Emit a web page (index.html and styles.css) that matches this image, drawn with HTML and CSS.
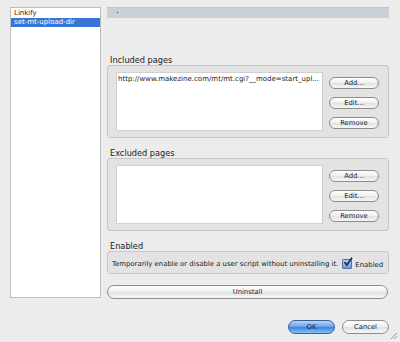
FILE: index.html
```html
<!DOCTYPE html>
<html lang="en">
<head>
    <meta charset="UTF-8">
    <title>Manage User Scripts</title>
    <link rel="stylesheet" href="styles.css">
</head>
<body>
    <div class="window">
        <div class="main">
            <!-- Installed scripts -->
            <ul class="script-list">
                <li>Linkify</li>
                <li class="selected">set-mt-upload-dir</li>
            </ul>

            <div class="detail">
                <div class="name-bar"><span class="dot"></span></div>

                <div class="section-label">Included pages</div>
                <div class="group">
                    <div class="page-list">
                        <div class="page-row">http://www.makezine.com/mt/mt.cgi?__mode=start_upl...</div>
                    </div>
                    <div class="group-buttons">
                        <button class="pill">Add...</button>
                        <button class="pill">Edit...</button>
                        <button class="pill">Remove</button>
                    </div>
                </div>

                <div class="section-label">Excluded pages</div>
                <div class="group">
                    <div class="page-list"></div>
                    <div class="group-buttons">
                        <button class="pill">Add...</button>
                        <button class="pill">Edit...</button>
                        <button class="pill">Remove</button>
                    </div>
                </div>

                <div class="section-label">Enabled</div>
                <div class="enabled-box">
                    <span>Temporarily enable or disable a user script without uninstalling it.</span>
                    <label class="check">
                        <span class="box">
                            <svg width="10" height="10" viewBox="0 0 10 10"><path d="M1.5 5 L3.8 8 L9 0.8" fill="none" stroke="#1a2f66" stroke-width="1.7"/></svg>
                        </span>
                        Enabled
                    </label>
                </div>

                <button class="pill uninstall">Uninstall</button>
            </div>
        </div>

        <div class="footer">
            <button class="pill ok">OK</button>
            <button class="pill cancel">Cancel</button>
        </div>

        <!-- resize grip -->
        <svg class="grip" width="8" height="8" viewBox="0 0 8 8">
            <path d="M7 1 L1 7 M7 4 L4 7" stroke="#9a9a9a" stroke-width="1"/>
        </svg>
    </div>
</body>
</html>
```

FILE: styles.css
```css
html, body {
    margin: 0;
    padding: 0;
    background-color: #ececec;
    font-family: "DejaVu Sans", Verdana, sans-serif;
    color: #1a1a1a;
}
.window {
    position: relative;
    width: 400px;
    height: 342px;
    box-sizing: border-box;
    padding: 7px 11px 0 10px;
}
.main {
    display: flex;
    gap: 6px;
}
.script-list {
    list-style: none;
    margin: 0;
    padding: 1px 0 0;
    width: 91px;
    height: 291px;
    box-sizing: border-box;
    background: white;
    border: 1px solid #bdbdbd;
    font-size: 7px;
}
.script-list li {
    height: 9px;
    line-height: 9px;
    padding-left: 3px;
}
.script-list li.selected {
    background-color: #3875d7;
    color: white;
}
.detail {
    width: 282px;
    display: flex;
    flex-direction: column;
}
.name-bar {
    height: 11px;
    background-color: #c9d0da;
    border-top: 1px solid #bcc3cd;
    box-sizing: border-box;
    position: relative;
}
.dot {
    position: absolute;
    left: 10px;
    top: 4px;
    width: 1px;
    height: 1px;
    background: #333;
}
.section-label {
    font-size: 8.2px;
    height: 10px;
    line-height: 10px;
    padding-left: 3px;
    margin-top: 10px;
}
.name-bar + .section-label {
    margin-top: 37px;
}
.group {
    display: flex;
    height: 73px;
    box-sizing: border-box;
    padding: 6px 8px 0 8px;
    background-color: #e3e3e3;
    border: 1px solid #c6c6c6;
    border-radius: 3px;
}
.page-list {
    width: 207px;
    height: 59px;
    background: white;
    border: 1px solid #d0d0d0;
    box-sizing: border-box;
    font-size: 7px;
}
.page-row {
    padding: 2px 1px 0;
    white-space: nowrap;
    overflow: hidden;
}
.group-buttons {
    display: flex;
    flex-direction: column;
    gap: 8px;
    margin: 5px 0 0 6px;
}
.pill {
    display: block;
    width: 50px;
    height: 12px;
    padding: 0;
    border: 1px solid #8c8c8c;
    border-radius: 7px;
    background: linear-gradient(#ffffff, #f1f1f1 45%, #e2e2e2 55%, #f7f7f7);
    font-family: "DejaVu Sans", Verdana, sans-serif;
    font-size: 6.8px;
    color: #222;
    line-height: 10px;
}
.enabled-box {
    display: flex;
    align-items: center;
    height: 23px;
    box-sizing: border-box;
    padding: 2px 4px 0 4px;
    background-color: #e3e3e3;
    border: 1px solid #c6c6c6;
    border-radius: 3px;
    font-size: 6.9px;
    white-space: nowrap;
}
.check {
    display: flex;
    align-items: flex-end;
    margin-left: 4px;
}
.box {
    display: block;
    width: 8px;
    height: 8px;
    margin-right: 3px;
    border: 1px solid #5b6f93;
    border-radius: 1px;
    background: linear-gradient(#b9d2f2, #6f9be0);
    position: relative;
}
.box svg {
    position: absolute;
    left: 0;
    top: -3px;
}
.uninstall {
    width: 281px;
    height: 14px;
    margin-top: 11px;
    border-radius: 8px;
    line-height: 12px;
}
.footer {
    display: flex;
    justify-content: flex-end;
    gap: 7px;
    margin-top: 21px;
}
.footer .pill {
    width: 47px;
    height: 14px;
    line-height: 12px;
}
.ok {
    border-color: #3b5d97;
    background: linear-gradient(#b8d6f8, #6ea5ea 45%, #3d84e0 55%, #8cc1f5);
    color: #10254d;
}
.grip {
    position: absolute;
    right: 2px;
    bottom: 2px;
}
```
